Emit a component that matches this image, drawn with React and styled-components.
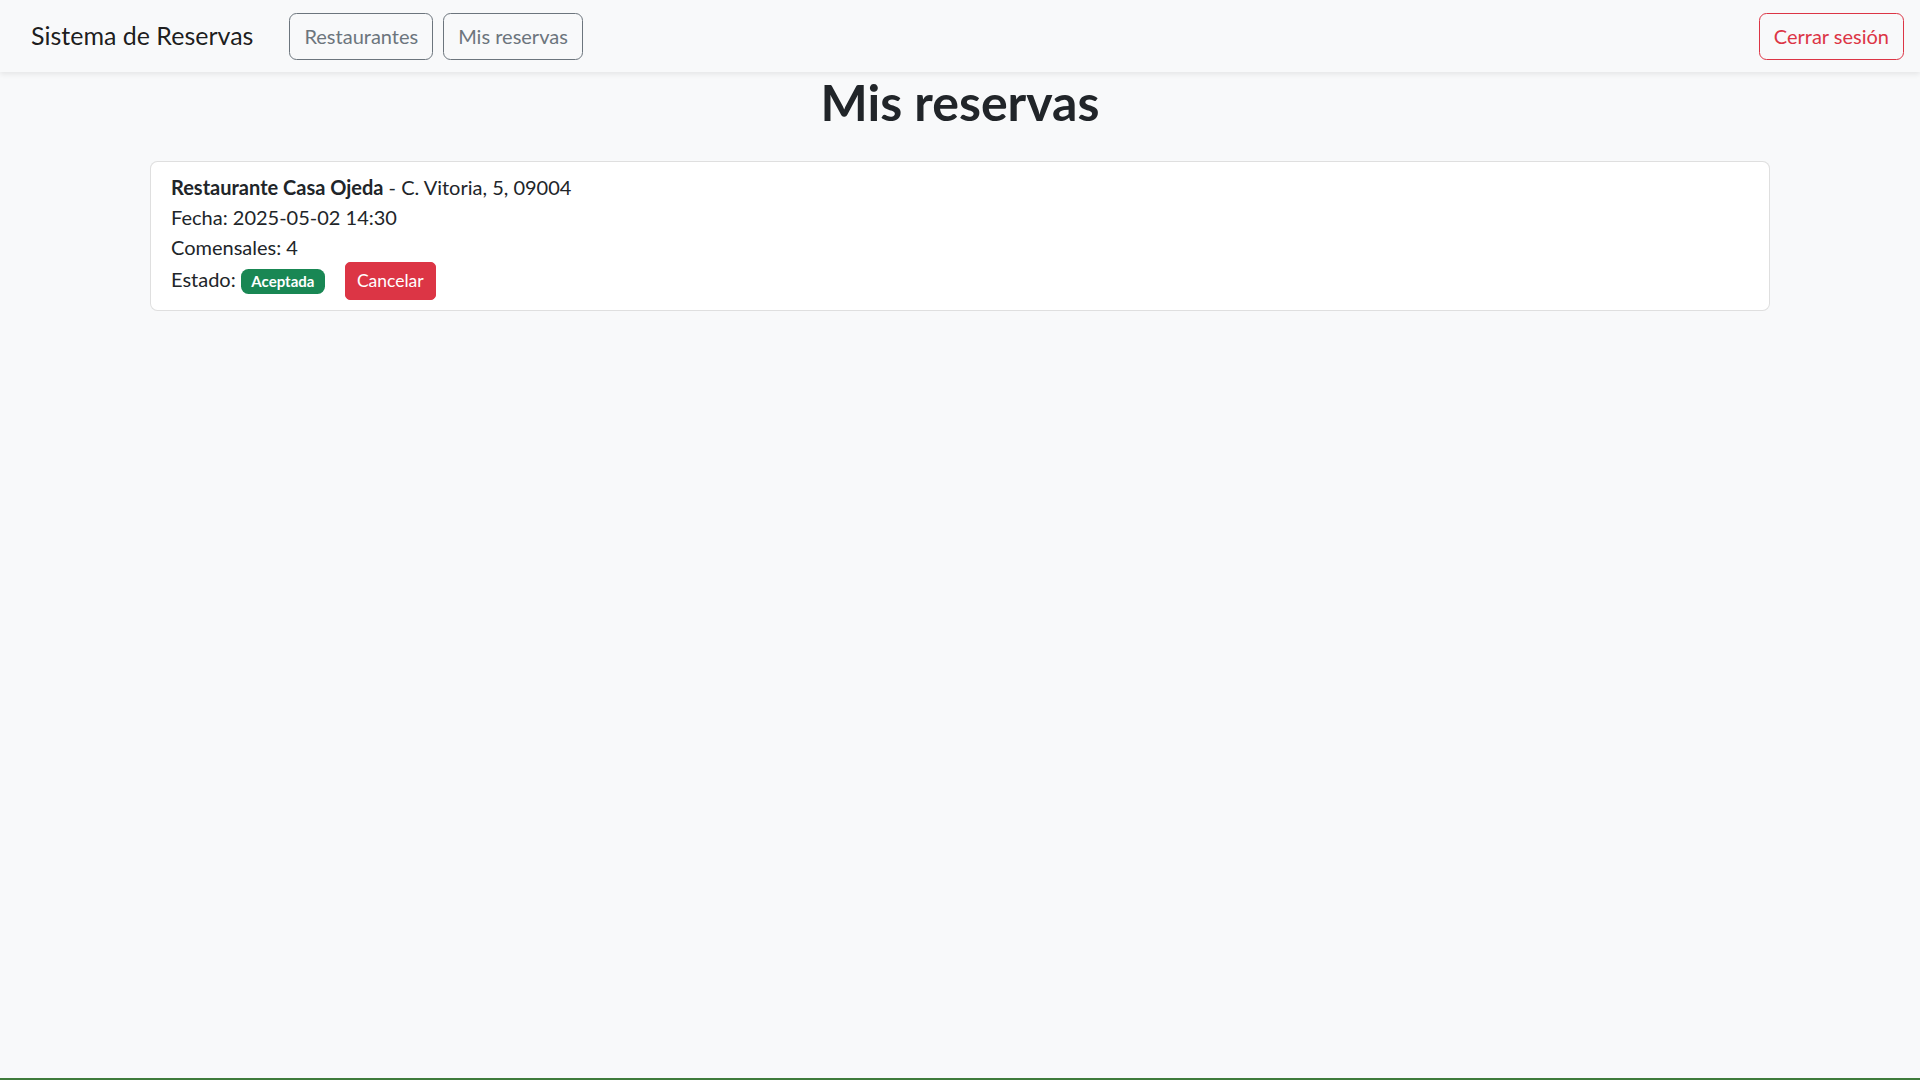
import { createGlobalStyle, styled } from 'styled-components';

const GlobalStyle = createGlobalStyle`
  html, body {
    margin: 0;
    padding: 0;
    background: #f8f9fa;
  }
  body {
    font-family: Lato, 'Liberation Sans', sans-serif;
    font-size: 20px;
    line-height: 1.5;
    color: #212529;
  }
  * {
    box-sizing: border-box;
  }
`;

const Page = styled.div`
  min-height: 100vh;
  display: flex;
  flex-direction: column;
`;

const Navbar = styled.nav`
  height: 72px;
  padding: 0 16px 0 31px;
  display: flex;
  align-items: center;
  background: #f8f9fa;
  box-shadow: 0 2.5px 5px rgba(0, 0, 0, 0.075);
  position: relative;
  z-index: 1;
`;

const Brand = styled.span`
  font-size: 25px;
  color: rgba(0, 0, 0, 0.9);
  margin-right: 36px;
  white-space: nowrap;
`;

const NavLinks = styled.div`
  display: flex;
  gap: 10px;
`;

const Button = styled.button`
  font-family: inherit;
  font-size: ${(p) => (p.$small ? '17.5px' : '20px')};
  line-height: 1.5;
  padding: ${(p) => (p.$small ? '5px 11px' : '7.5px 14px')};
  border-radius: ${(p) => (p.$small ? '5px' : '7.5px')};
  border: 1px solid ${(p) => p.$color};
  color: ${(p) => (p.$solid ? '#fff' : p.$color)};
  background: ${(p) => (p.$solid ? p.$color : 'transparent')};
  cursor: pointer;
  white-space: nowrap;
`;

const Logout = styled(Button)`
  margin-left: auto;
`;

const Main = styled.main`
  flex: 1;
`;

const Title = styled.h1`
  margin: 0 0 10px;
  font-size: 50px;
  font-weight: 700;
  line-height: 60px;
  text-align: center;
  color: #212529;
`;

const Container = styled.div`
  max-width: 1650px;
  margin: 29px auto 0;
  padding: 0 15px;
`;

const Card = styled.div`
  background: #fff;
  border: 1px solid rgba(0, 0, 0, 0.125);
  border-radius: 7.5px;
  padding: 10px 20px;
`;

const Line = styled.div`
  line-height: 30px;
`;

const Badge = styled.span`
  display: inline-block;
  font-size: 15px;
  font-weight: 700;
  line-height: 1;
  padding: 5.25px 10.5px;
  border-radius: 7.5px;
  color: #fff;
  background: ${(p) => p.$bg};
  vertical-align: baseline;
`;

const CancelButton = styled(Button)`
  margin-left: 20px;
`;

const Footer = styled.div`
  height: 2px;
  background: #3f7b3b;
`;

const reservas = [
  {
    id: 1,
    restaurante: 'Restaurante Casa Ojeda',
    direccion: 'C. Vitoria, 5, 09004',
    fecha: '2025-05-02 14:30',
    comensales: 4,
    estado: 'Aceptada',
  },
];

const App = () => {
  return (
    <>
      <GlobalStyle />
      <Page>
        <Navbar>
          <Brand>Sistema de Reservas</Brand>
          <NavLinks>
            <Button $color='#6c757d'>Restaurantes</Button>
            <Button $color='#6c757d'>Mis reservas</Button>
          </NavLinks>
          <Logout $color='#dc3545'>Cerrar sesión</Logout>
        </Navbar>
        <Main>
          <Title>Mis reservas</Title>
          <Container>
            {reservas.map((r) => (
              <Card key={r.id}>
                <Line>
                  <strong>{r.restaurante}</strong> - {r.direccion}
                </Line>
                <Line>Fecha: {r.fecha}</Line>
                <Line>Comensales: {r.comensales}</Line>
                <Line>
                  Estado: <Badge $bg='#198754'>{r.estado}</Badge>
                  <CancelButton $small $solid $color='#dc3545'>
                    Cancelar
                  </CancelButton>
                </Line>
              </Card>
            ))}
          </Container>
        </Main>
        <Footer />
      </Page>
    </>
  );
};

export default App;
